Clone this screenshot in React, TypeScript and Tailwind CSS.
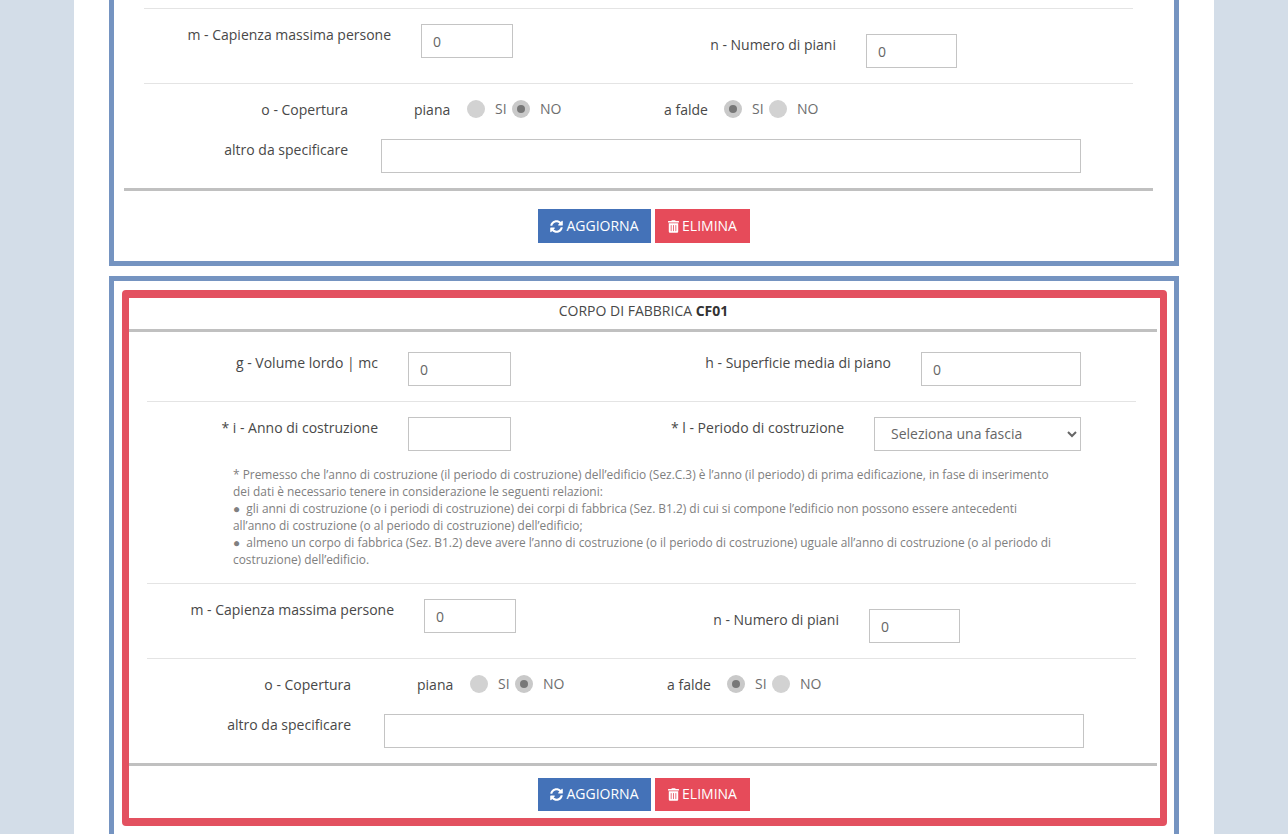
import React from "react";
import { FaSyncAlt, FaTrashAlt } from "react-icons/fa";

const inputCls = "block h-[34px] border border-[#c4c4c4] bg-white px-[11px] text-[14px] text-[#666] outline-none";
const labelCls = "block text-right text-[14px] leading-[20px] text-[#484848]";
const optCls = "text-[14px] leading-[20px] text-[#6e6e6e]";

function Divider() {
  return <div className="ml-[18px] h-px w-[989px] bg-[#e4e4e4]" />;
}

function Radio({ checked }: { checked?: boolean }) {
  return (
    <span className={"flex h-[18px] w-[18px] shrink-0 items-center justify-center rounded-full " + (checked ? "bg-[#c9c9c9]" : "bg-[#d2d2d2]")}>
      {checked && <span className="h-[8px] w-[8px] rounded-full bg-[#777]" />}
    </span>
  );
}

function Lower() {
  return (
    <>
      <Divider />
      <div className="flex h-[74px] items-start">
        <label className={labelCls + " mt-[16px] w-[265px]"}>m - Capienza massima persone</label>
        <input defaultValue="0" className={inputCls + " ml-[30px] mt-[15px] w-[92px]"} />
        <label className={labelCls + " mt-[26px] w-[323px]"}>n - Numero di piani</label>
        <input defaultValue="0" className={inputCls + " ml-[30px] mt-[25px] w-[91px]"} />
      </div>
      <Divider />
      <div className="mt-[15px] flex h-[20px] items-center">
        <span className={labelCls + " w-[222px] translate-y-px"}>o - Copertura</span>
        <span className={labelCls + " ml-[66px] w-[53px] translate-y-px !text-left"}>piana</span>
        <Radio />
        <span className={optCls + " ml-[10px] w-[17px]"}>SI</span>
        <Radio checked />
        <span className={optCls + " ml-[10px] w-[124px]"}>NO</span>
        <span className={labelCls + " w-[60px] translate-y-px !text-left"}>a falde</span>
        <Radio checked />
        <span className={optCls + " ml-[10px] w-[17px]"}>SI</span>
        <Radio />
        <span className={optCls + " ml-[10px]"}>NO</span>
      </div>
      <div className="mt-[20px] flex items-start">
        <label className={labelCls + " mt-px w-[222px]"}>altro da specificare</label>
        <input className={inputCls + " ml-[33px] w-[700px]"} />
      </div>
    </>
  );
}

function Buttons({ className }: { className: string }) {
  return (
    <div className={"flex gap-[4px] pl-[409px] " + className}>
      <button className="flex h-full w-[113px] items-center justify-center gap-[3px] bg-[#4472b8] text-[14px] text-white">
        <FaSyncAlt className="h-[13px] w-[13px]" />
        <span className="-translate-y-px">AGGIORNA</span>
      </button>
      <button className="flex h-full w-[95px] items-center justify-center gap-[3px] bg-[#e64b5a] text-[14px] text-white">
        <FaTrashAlt className="h-[13px] w-[11px]" />
        <span className="-translate-y-px">ELIMINA</span>
      </button>
    </div>
  );
}

export default function App() {
  return (
    <div className="flex h-[834px] justify-center overflow-hidden bg-[#d3dde8] font-['Open_Sans',sans-serif]">
      <div className="flex w-[1140px] flex-col gap-[10px] bg-white px-[35px]">
        <section className="h-[266px] shrink-0 border-[5px] border-t-0 border-[#7594c1] pt-[8px]">
          <div className="ml-[12px]">
            <Lower />
          </div>
          <div className="ml-[10px] mt-[15px] h-[3px] w-[1029px] bg-[#c0c0c0]" />
          <div className="pl-[15px]">
            <Buttons className="mt-[18px] h-[34px]" />
          </div>
        </section>

        <section className="h-[570px] shrink-0 border-[5px] border-b-0 border-[#7594c1] pt-[9px]">
          <div className="ml-[8px] h-[536px] w-[1045px] rounded-[4px] border-x-[7px] border-y-[8px] border-[#e35160]">
            <div className="flex h-[31px] items-start justify-center pr-[2px] pt-[2px] text-[14px] text-[#484848]">
              <span>CORPO DI FABBRICA <b className="font-bold text-[#333]">CF01</b></span>
            </div>
            <div className="mr-[3px] h-[3px] bg-[#c0c0c0]" />
            <div className="flex h-[69px] items-start">
              <label className={labelCls + " mt-[21px] w-[249px]"}>g - Volume lordo | mc</label>
              <input defaultValue="0" className={inputCls + " ml-[30px] mt-[20px] w-[103px]"} />
              <label className={labelCls + " mt-[21px] w-[380px]"}>h - Superficie media di piano</label>
              <input defaultValue="0" className={inputCls + " ml-[30px] mt-[20px] w-[160px]"} />
            </div>
            <Divider />
            <div className="flex h-[49px] items-start">
              <label className={labelCls + " mt-[16px] w-[249px]"}>* i - Anno di costruzione</label>
              <input className={inputCls + " ml-[30px] mt-[15px] w-[103px]"} />
              <label className={labelCls + " mt-[16px] w-[333px]"}>* l - Periodo di costruzione</label>
              <select className={inputCls + " ml-[30px] mt-[15px] w-[207px] !pl-[12px] !pb-[2px]"} defaultValue="">
                <option value="">Seleziona una fascia</option>
              </select>
            </div>
            <p className="ml-[104px] mt-[15px] mb-[15px] text-[11.9px] leading-[17px] text-[#808080]">
              * Premesso che l’anno di costruzione (il periodo di costruzione) dell’edificio (Sez.C.3) è l’anno (il periodo) di prima edificazione, in fase di inserimento<br />
              dei dati è necessario tenere in considerazione le seguenti relazioni:<br />
              ●&nbsp; gli anni di costruzione (o i periodi di costruzione) dei corpi di fabbrica (Sez. B1.2) di cui si compone l’edificio non possono essere antecedenti<br />
              all’anno di costruzione (o al periodo di costruzione) dell’edificio;<br />
              ●&nbsp; almeno un corpo di fabbrica (Sez. B1.2) deve avere l’anno di costruzione (o il periodo di costruzione) uguale all’anno di costruzione (o al periodo di<br />
              costruzione) dell’edificio.
            </p>
            <Lower />
            <div className="mr-[3px] mt-[15px] h-[3px] bg-[#c0c0c0]" />
            <Buttons className="mt-[12px] h-[33px]" />
          </div>
        </section>
      </div>
    </div>
  );
}
